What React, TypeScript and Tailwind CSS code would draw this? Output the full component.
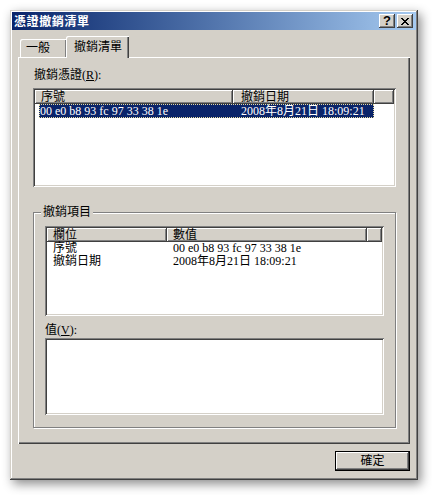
const raised =
  'shadow-[inset_-1px_-1px_#404040,inset_1px_1px_#ffffff,inset_-2px_-2px_#808080]'
const sunken =
  'shadow-[inset_1px_1px_#808080,inset_-1px_-1px_#ffffff,inset_2px_2px_#404040,inset_-2px_-2px_#d4d0c8]'

function HeaderCell({ label, className = '' }: { label?: string; className?: string }) {
  return (
    <div className={`h-full bg-[#d4d0c8] pl-[6px] leading-[14px] ${raised} ${className}`}>
      {label}
    </div>
  )
}

function CaptionButton({ children }: { children: React.ReactNode }) {
  return (
    <div
      className={`flex h-[14px] w-[16px] items-center justify-center bg-[#d4d0c8] ${raised}`}
    >
      {children}
    </div>
  )
}

export default function App() {
  return (
    <div className="h-[495px] w-[432px] bg-white pl-[10px] pt-[10px] font-['Liberation_Serif','Noto_Sans_CJK_TC',serif] text-[12px] text-black">
      <div className="flex h-[470px] w-[408px] flex-col bg-[#d4d0c8] p-[2px] shadow-[inset_-1px_-1px_#404040,inset_1px_1px_#d4d0c8,inset_-2px_-2px_#808080,inset_2px_2px_#ffffff,3px_4px_10px_rgba(0,0,0,0.45)]">
        {/* title bar */}
        <div className="flex h-[18px] items-center bg-gradient-to-r from-[#0a246a] to-[#a6caf0] pl-[2px] pr-[3px]">
          <span className="font-['Noto_Sans_CJK_TC',sans-serif] text-[12px] font-bold leading-[18px] tracking-[0.6px] text-white">
            憑證撤銷清單
          </span>
          <div className="ml-auto flex gap-[2px]">
            <CaptionButton>
              <span className="-mt-px font-['Liberation_Sans',sans-serif] text-[13px] font-bold leading-[13px]">?</span>
            </CaptionButton>
            <CaptionButton>
              <svg width="8" height="7" viewBox="0 0 8 7" shapeRendering="crispEdges">
                <path d="M0 0h2v1H0zM6 0h2v1H6zM1 1h2v1H1zM5 1h2v1H5zM2 2h4v1H2zM3 3h2v1H3zM2 4h4v1H2zM1 5h2v1H1zM5 5h2v1H5zM0 6h2v1H0zM6 6h2v1H6z" fill="#000" />
              </svg>
            </CaptionButton>
          </div>
        </div>

        <div className="flex flex-1 flex-col px-[6px] pt-[6px] pb-[7px]">
          {/* tabs */}
          <div className="flex h-[21px] items-end pl-[2px]">
            <div className="flex h-[18px] w-[47px] items-center rounded-tl-[2px] pl-[6px] leading-[14px] shadow-[inset_1px_1px_#ffffff,inset_-1px_0_#404040,inset_-2px_0_#808080]">
              一般
            </div>
            <div className="relative z-10 -mb-px -ml-px flex h-[22px] w-[63px] items-start rounded-tl-[2px] bg-[#d4d0c8] pl-[8px] pt-[4px] leading-[14px] shadow-[inset_1px_1px_#ffffff,inset_-1px_0_#404040,inset_-2px_0_#808080]">
              撤銷清單
            </div>
          </div>

          {/* tab page */}
          <div className="flex h-[387px] flex-col pl-[15px] pr-[14px] pt-[11px] shadow-[inset_1px_1px_#ffffff,inset_-1px_-1px_#404040,inset_-2px_-2px_#808080]">
            <div className="h-[15px] pl-px leading-[15px]">
              撤銷憑證(<span className="underline">R</span>):
            </div>

            {/* revoked certificates list */}
            <div className={`mt-[5px] h-[99px] bg-white p-[2px] ${sunken}`}>
              <div className="flex h-[14px]">
                <HeaderCell label="序號" className="w-[198px]" />
                <HeaderCell label="撤銷日期" className="w-[141px] pl-[8px]" />
                <HeaderCell className="flex-1" />
              </div>
              <div className="ml-[4px] flex h-[14px] w-[335px] items-center bg-[#0a246a] leading-[13px] text-white outline-1 -outline-offset-1 outline-dotted outline-[#e8dca0]">
                <span className="w-[194px] pl-px">00 e0 b8 93 fc 97 33 38 1e</span>
                <span className="pl-[8px]">2008年8月21日 18:09:21</span>
              </div>
            </div>

            {/* revocation entry group */}
            <div className="relative mt-[25px] h-[216px] border border-[#808080] px-[11px] pt-[13px] shadow-[inset_1px_1px_#ffffff,1px_1px_#ffffff]">
              <span className="absolute -top-[8px] left-[7px] bg-[#d4d0c8] px-[2px] leading-[15px]">
                撤銷項目
              </span>

              <div className={`h-[90px] bg-white p-[2px] ${sunken}`}>
                <div className="flex h-[14px]">
                  <HeaderCell label="欄位" className="w-[120px]" />
                  <HeaderCell label="數值" className="w-[200px]" />
                  <HeaderCell className="flex-1" />
                </div>
                <div className="flex h-[13px] leading-[13px]">
                  <span className="w-[120px] pl-[6px]">序號</span>
                  <span className="pl-[6px]">00 e0 b8 93 fc 97 33 38 1e</span>
                </div>
                <div className="flex h-[13px] leading-[13px]">
                  <span className="w-[120px] pl-[6px]">撤銷日期</span>
                  <span className="pl-[6px]">2008年8月21日 18:09:21</span>
                </div>
              </div>

              <div className="mt-[7px] h-[15px] leading-[15px]">
                值(<span className="underline">V</span>):
              </div>
              <div className={`h-[77px] bg-white ${sunken}`} />
            </div>
          </div>

          {/* buttons */}
          <div className="mt-[7px] flex justify-end">
            <div className="h-[20px] w-[75px] border border-black bg-[#d4d0c8] shadow-[inset_-1px_-1px_#404040,inset_1px_1px_#ffffff,inset_-2px_-2px_#808080]">
              <div className="text-center leading-[18px]">確定</div>
            </div>
          </div>
        </div>
      </div>
    </div>
  )
}
